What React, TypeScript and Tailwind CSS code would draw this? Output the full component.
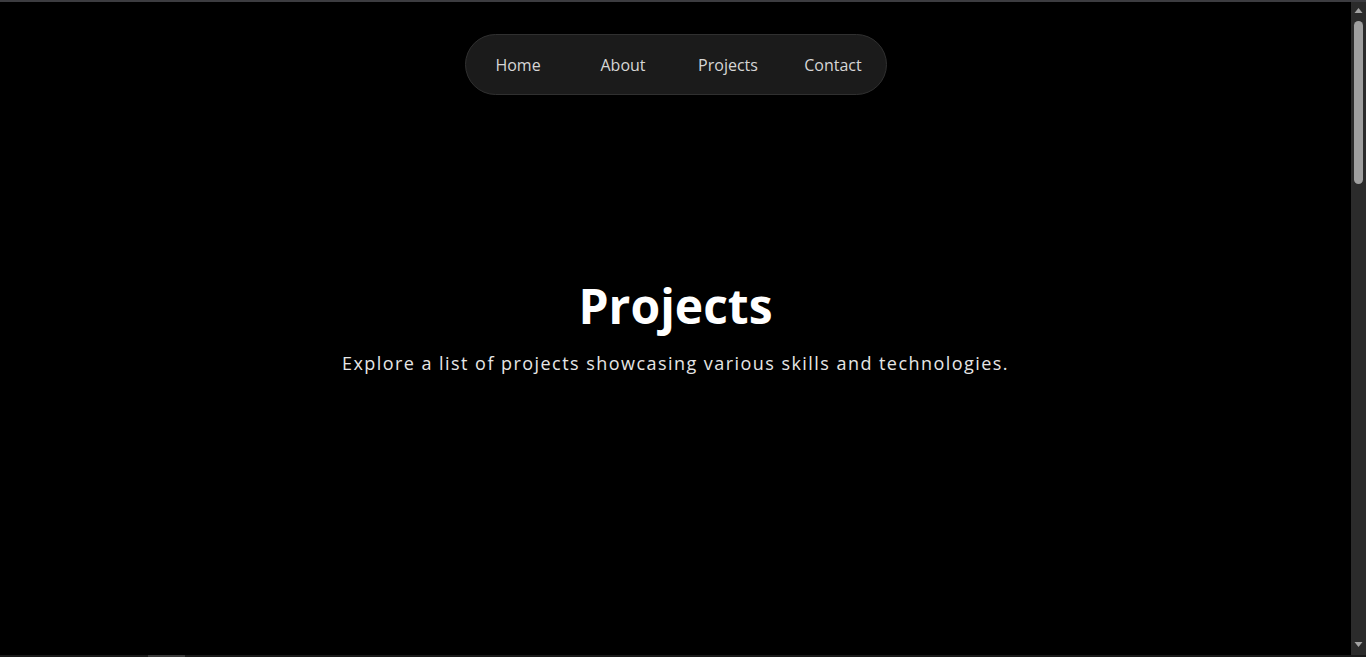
import React from "react";

const links = ["Home", "About", "Projects", "Contact"];

function ScrollbarV() {
  return (
    <aside className="w-[15px] h-full bg-[#2b2b2b] flex flex-col items-center">
      <svg width="15" height="17" viewBox="0 0 15 17" className="shrink-0">
        <path d="M3.5 11 L7.5 6 L11.5 11 Z" fill="#a3a3a3" />
      </svg>
      <div className="w-[9px] h-[163px] rounded-full bg-[#9f9f9f] mt-[2px]" />
      <div className="flex-1" />
      <svg width="15" height="17" viewBox="0 0 15 17" className="shrink-0 mb-[2px]">
        <path d="M3.5 6 L11.5 6 L7.5 11 Z" fill="#a3a3a3" />
      </svg>
    </aside>
  );
}

export default function App() {
  return (
    <div className="h-screen flex flex-col bg-black border-t-2 border-[#3c3c40] overflow-hidden font-['Open_Sans','Noto_Sans',sans-serif]">
      <div className="flex-1 flex min-h-0">
        <main className="flex-1">
          <header className="flex justify-center pt-8">
            <nav className="flex items-center h-[61px] rounded-full bg-[#1b1b1b] border border-[#303030]">
              {links.map((l) => (
                <a
                  key={l}
                  href="#"
                  className="w-[105px] text-center text-[16px] text-[#d6d6d6]"
                >
                  {l}
                </a>
              ))}
            </nav>
          </header>

          <section className="flex flex-col items-center pt-[187px]">
            <h1 className="text-[48px] font-bold leading-none text-white">
              Projects
            </h1>
            <p className="mt-[20px] text-[18px] tracking-[1.45px] text-[#e6e6e6]">
              Explore a list of projects showcasing various skills and technologies.
            </p>
          </section>
        </main>
        <ScrollbarV />
      </div>
      <div className="h-[2px] bg-[#1a1a1a] flex">
        <div className="ml-[148px] w-[37px] bg-[#3a3a3a]" />
      </div>
    </div>
  );
}
